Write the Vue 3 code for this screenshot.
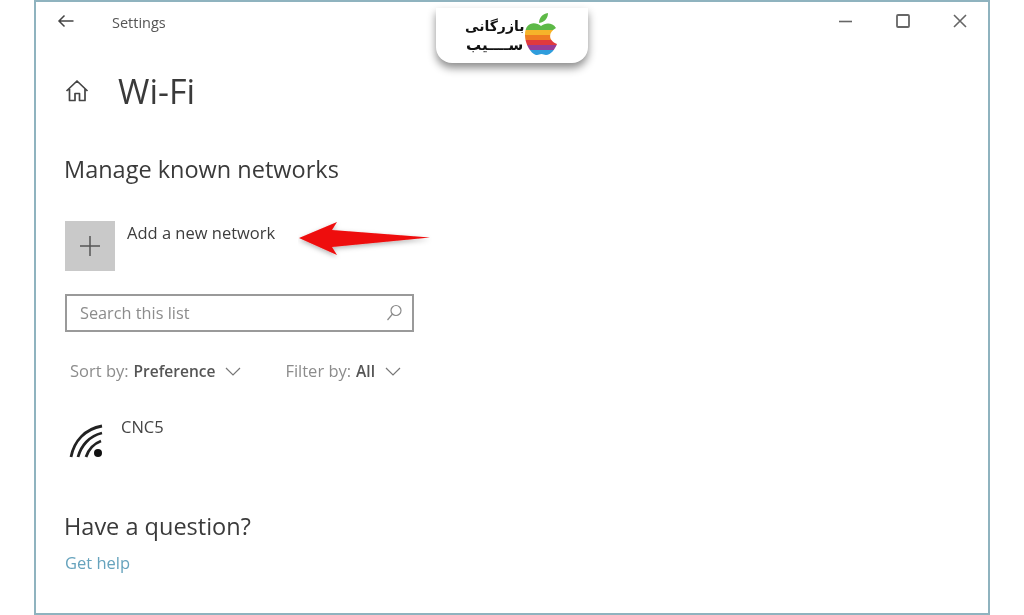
<script setup>
const rainbow = [
  { y: 10, h: 8, c: '#5db947' },
  { y: 18, h: 5, c: '#f6b42a' },
  { y: 23, h: 5, c: '#ef7d22' },
  { y: 28, h: 5, c: '#e0393e' },
  { y: 33, h: 5, c: '#963d97' },
  { y: 38, h: 6, c: '#2f9ddc' },
]
</script>

<template>
  <div class="window">
    <div class="titlebar">
      <svg class="back" width="18" height="14" viewBox="0 0 18 14">
        <path d="M16.500 7H2M7.500 1.500L2 7l5.500 5.500" fill="none" stroke="#444" stroke-width="1.500" />
      </svg>
      <span class="title">Settings</span>
      <div class="controls">
        <svg width="14" height="14" viewBox="0 0 14 14"><path d="M0 7.500h13" stroke="#666" stroke-width="1.600" /></svg>
        <svg width="14" height="14" viewBox="0 0 14 14"><rect x="1" y="1" width="12" height="12" rx="1" fill="none" stroke="#666" stroke-width="1.800" /></svg>
        <svg width="14" height="14" viewBox="0 0 14 14"><path d="M1 1l12 12M13 1L1 13" stroke="#666" stroke-width="1.600" /></svg>
      </div>
    </div>

    <div class="page-head">
      <svg width="24" height="24" viewBox="0 0 24 24">
        <path d="M1.500 12L12 2l10.500 10M4.500 10v11.500h5.500v-7h4.500v7H20V10" fill="none" stroke="#444" stroke-width="1.700" stroke-linejoin="round" />
      </svg>
      <h1>Wi-Fi</h1>
    </div>

    <h2 class="manage">Manage known networks</h2>

    <div class="add-row">
      <div class="tile">
        <svg width="22" height="22" viewBox="0 0 22 22"><path d="M11 1v20M1 11h20" stroke="#555" stroke-width="1.500" /></svg>
      </div>
      <span class="add-text">Add a new network</span>
    </div>

    <div class="search">
      <span>Search this list</span>
      <svg width="16" height="18" viewBox="0 0 16 18">
        <circle cx="10" cy="6.500" r="5" fill="none" stroke="#8a8a8a" stroke-width="1.200" />
        <path d="M6.500 10L1.500 16" stroke="#8a8a8a" stroke-width="1.200" />
      </svg>
    </div>

    <div class="filters">
      <div class="filter">
        <span class="lbl">Sort by:</span> <b>Preference</b>
        <svg width="16" height="9" viewBox="0 0 16 9"><path d="M1 1l7 7 7-7" fill="none" stroke="#777" stroke-width="1.200" /></svg>
      </div>
      <div class="filter">
        <span class="lbl">Filter by:</span> <b>All</b>
        <svg width="16" height="9" viewBox="0 0 16 9"><path d="M1 1l7 7 7-7" fill="none" stroke="#777" stroke-width="1.200" /></svg>
      </div>
    </div>

    <div class="network">
      <svg width="36" height="36" viewBox="0 0 36 36">
        <g fill="none" stroke="#222" stroke-width="2.800">
          <path d="M2 33C5 17 16 5 33 2" />
          <path d="M9 33C12 22 20 12 33 9" />
          <path d="M17 33C19 27 24 20 32 17" />
        </g>
        <circle cx="29" cy="29" r="4" fill="#111" />
      </svg>
      <span class="net-name">CNC5</span>
    </div>

    <h2 class="question">Have a question?</h2>
    <a class="help">Get help</a>

    <svg class="arrow" width="136" height="40" viewBox="0 0 136 40">
      <defs>
        <filter id="arrow-shadow" x="-10%" y="-30%" width="120%" height="170%">
          <feDropShadow dx="0" dy="2" stdDeviation="2.500" flood-color="#000" flood-opacity="0.3" />
        </filter>
      </defs>
      <path d="M1 18L39 2l-5 8 98 7.500L34 27l5 8z" fill="#ee0a0a" filter="url(#arrow-shadow)" />
    </svg>

    <div class="logo">
      <div class="logo-text">
        <span class="l1">بازرگانی</span>
        <span class="l2">ســــیب</span>
      </div>
      <svg class="apple" width="34" height="44" viewBox="0 0 34 44">
        <clipPath id="apple">
          <path d="M17 14C11 9 1 10 1 23c0 10 7 20 12 20 2 0 2.500-1 4.500-1s2.500 1 4.500 1c5 0 9-6 11-11-9-3-9-12-1-16-4-6-11-5-15-2z" />
        </clipPath>
        <path d="M15 11C15 6 18 2 24 1c0 5-3 9-9 10z" fill="#5db947" />
        <g clip-path="url(#apple)">
          <rect v-for="b in rainbow" :key="b.y" x="0" :y="b.y" width="34" :height="b.h" :fill="b.c" />
        </g>
      </svg>
    </div>
  </div>
</template>

<style scoped>
.window {
  position: relative;
  box-sizing: border-box;
  width: 956px;
  height: 615px;
  margin-left: 34px;
  padding: 0 0 0 29px;
  border: 2px solid #8fb3bf;
  background: #fff;
  font-family: "Open Sans", "Noto Sans", sans-serif;
  color: #333;
  filter: blur(0.5px);
}

.titlebar {
  display: flex;
  align-items: center;
  height: 38px;
}

.back {
  margin-left: -8px;
}

.title {
  margin-left: 37px;
  margin-top: 2px;
  font-size: 14.500px;
  color: #555;
}

.controls {
  display: flex;
  gap: 43px;
  margin-left: auto;
  margin-right: 21px;
}

.page-head {
  display: flex;
  align-items: center;
  gap: 29px;
  height: 46px;
  margin-top: 28px;
}

h1 {
  margin: 0;
  font-size: 34px;
  font-weight: 400;
  color: #3a3a3a;
  line-height: 46px;
}

h2 {
  margin: 0 0 0 -1px;
  font-size: 23.500px;
  font-weight: 400;
  color: #3a3a3a;
}

.manage {
  margin-top: 39px;
  line-height: 32px;
}

.add-row {
  display: flex;
  gap: 12px;
  margin-top: 36px;
}

.tile {
  display: flex;
  align-items: center;
  justify-content: center;
  width: 50px;
  height: 50px;
  background: #c9c9c9;
}

.add-text {
  font-size: 16.500px;
  line-height: 24px;
  color: #3d3d3d;
}

.search {
  display: flex;
  align-items: center;
  justify-content: space-between;
  box-sizing: border-box;
  width: 349px;
  height: 38px;
  margin-top: 23px;
  padding: 0 10px 0 13px;
  border: 2px solid #9a9a9a;
  font-size: 16.300px;
  color: #8c8c8c;
}

.filters {
  display: flex;
  gap: 44px;
  margin-top: 27px;
  margin-left: 5px;
}

.filter {
  display: flex;
  align-items: center;
  gap: 5px;
  font-size: 16.500px;
  line-height: 24px;
}

.filter svg {
  margin-left: 5px;
}

.lbl {
  color: #8c8c8c;
}

.filter b {
  font-size: 15.500px;
  font-weight: 600;
  color: #555;
}

.network {
  display: flex;
  gap: 16px;
  margin-top: 41px;
  margin-left: 4px;
}

.net-name {
  font-size: 16.500px;
  line-height: 22px;
  margin-top: -8px;
  color: #444;
}

.question {
  margin-top: 50px;
  line-height: 32px;
}

.help {
  display: block;
  margin-top: 10px;
  font-size: 16.500px;
  line-height: 22px;
  color: #66a3bd;
}

.arrow {
  position: absolute;
  left: 262px;
  top: 218px;
}

.logo {
  position: absolute;
  left: 400px;
  top: 6px;
  display: flex;
  align-items: center;
  box-sizing: border-box;
  width: 152px;
  height: 55px;
  padding-left: 29px;
  background: #fff;
  border-radius: 0 0 16px 16px;
  box-shadow: 0 5px 8px rgba(0, 0, 0, 0.45);
}

.apple {
  margin-top: -3px;
}

.logo-text {
  display: flex;
  flex-direction: column;
  align-items: center;
  font-family: "DejaVu Sans", sans-serif;
  font-weight: 700;
  color: #111;
  direction: rtl;
  line-height: 19px;
}

.l1 {
  font-size: 14px;
}

.l2 {
  font-size: 15px;
}
</style>
